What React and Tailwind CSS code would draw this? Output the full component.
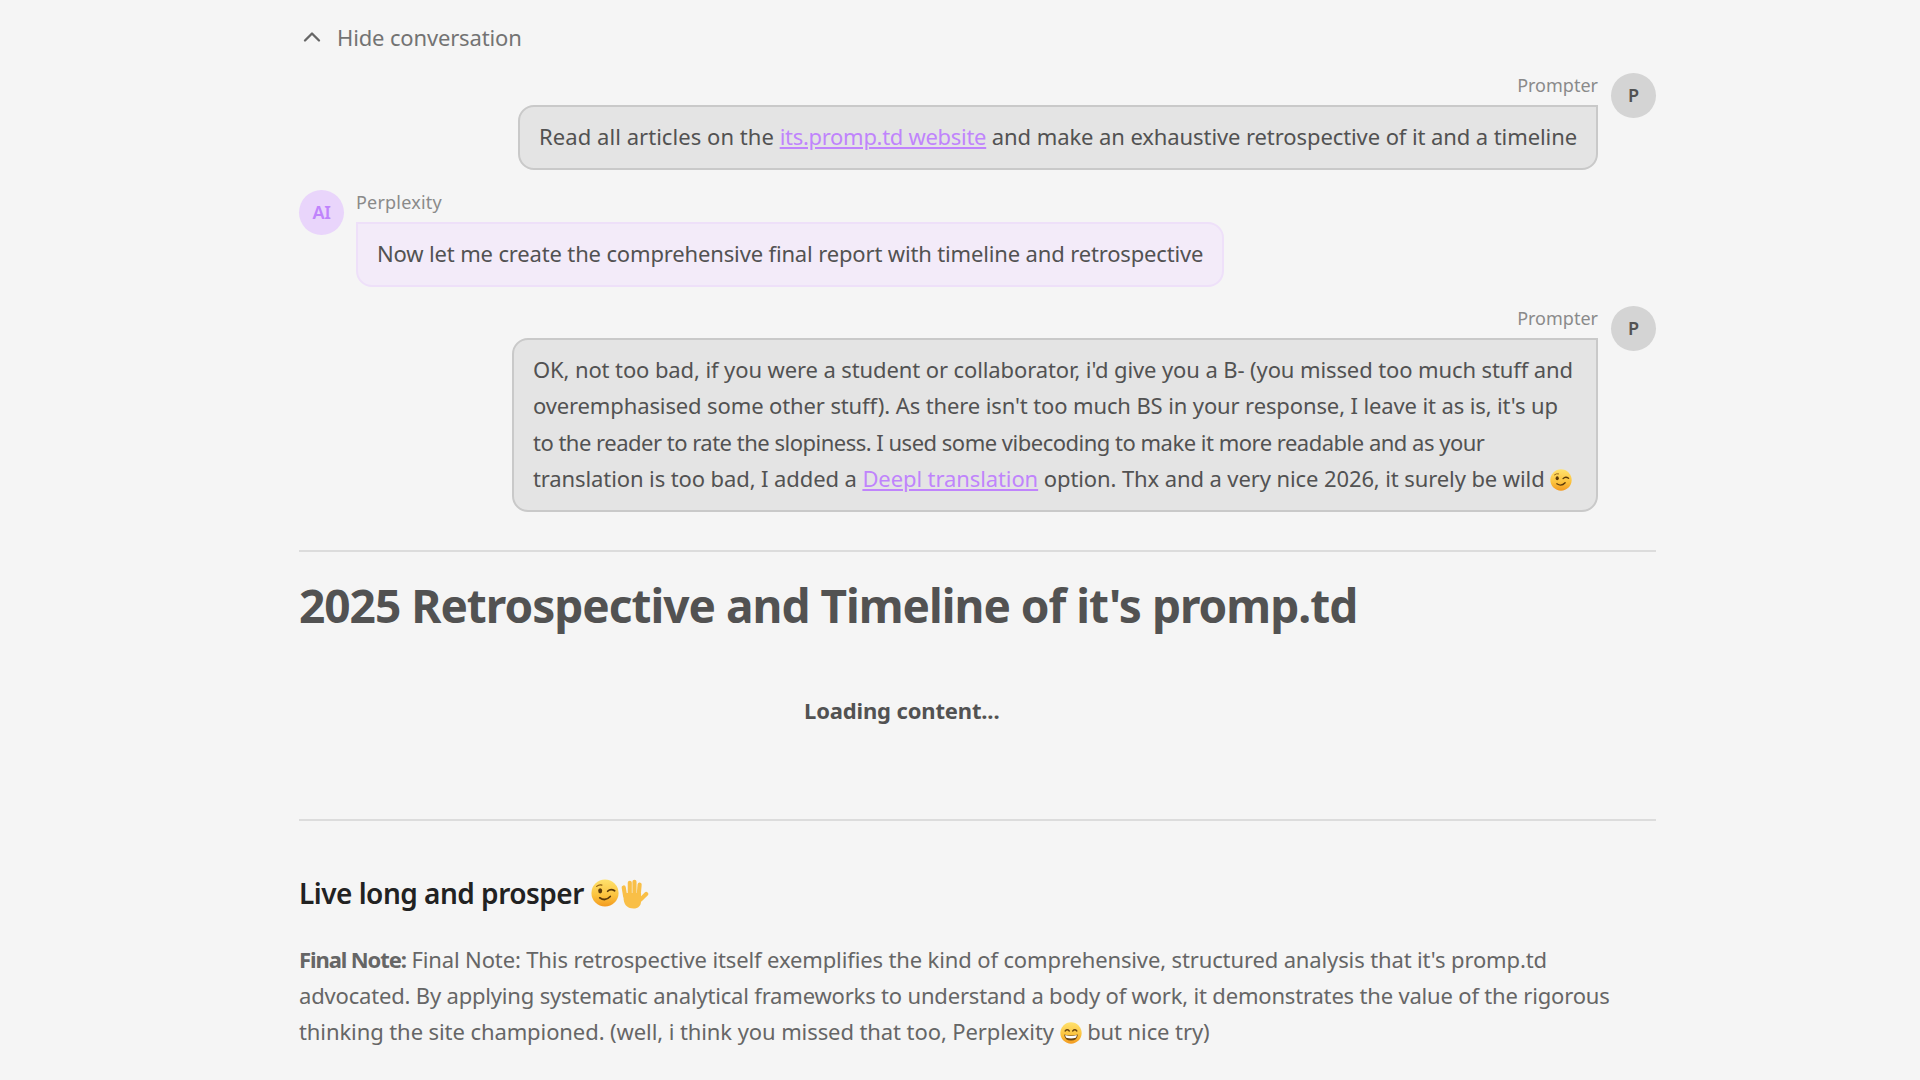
import React from "react";
import { ChevronUp } from "lucide-react";

const F = { fontFamily: '"Noto Sans", sans-serif' };

function Wink({ s = 24, cls = "align-[-4px]" }) {
  return (
    <svg width={s} height={s} viewBox="0 0 32 32" className={`inline-block ${cls}`}>
      <defs>
        <linearGradient id="w" x1="0" y1="0" x2="0" y2="1">
          <stop offset="0%" stopColor="#ffe26e" />
          <stop offset="60%" stopColor="#fbc23d" />
          <stop offset="100%" stopColor="#f39a1f" />
        </linearGradient>
      </defs>
      <circle cx="16" cy="16" r="15.5" fill="url(#w)" />
      <ellipse cx="10.5" cy="13.5" rx="2.3" ry="3" fill="#5b3a0a" />
      <path d="M6.5 8.5q3-2.5 6-1.5" stroke="#8a5a10" strokeWidth="1.3" fill="none" strokeLinecap="round" />
      <path d="M19 14q3.5-3.5 8-.5" stroke="#5b3a0a" strokeWidth="2" fill="none" strokeLinecap="round" />
      <path d="M10 21.5q6.5 4.5 12-1.5" stroke="#5b3a0a" strokeWidth="2" fill="none" strokeLinecap="round" />
    </svg>
  );
}

function Hand({ s = 30 }) {
  return (
    <svg width={s} height={s} viewBox="0 0 32 32" className="inline-block align-[-5px]">
      <g stroke="#f9bf47" strokeWidth="4.4" strokeLinecap="round" fill="none">
        <path d="M6.5 18L5 9" />
        <path d="M11.5 16V4" />
        <path d="M16.5 16V3" />
        <path d="M21 17L22 6" />
        <path d="M23 22L29 16" />
      </g>
      <path d="M4.5 15h19v9c0 4.500-3 7.500-8 7.500-6 0-9.500-3-10.500-9z" fill="#f9bf47" />
    </svg>
  );
}

function Grin({ s = 22 }) {
  return (
    <svg width={s} height={s} viewBox="0 0 32 32" className="inline-block align-[-4px]">
      <defs>
        <linearGradient id="g" x1="0" y1="0" x2="0" y2="1">
          <stop offset="0%" stopColor="#ffe26e" />
          <stop offset="60%" stopColor="#fbc23d" />
          <stop offset="100%" stopColor="#f39a1f" />
        </linearGradient>
      </defs>
      <circle cx="16" cy="16" r="15.5" fill="url(#g)" />
      <path d="M7.500 13q3-3.500 6 0M18.500 13q3-3.500 6 0" stroke="#6b4510" strokeWidth="2" fill="none" strokeLinecap="round" />
      <path d="M6 18q10 3 20 0q-1 9-10 9t-10-9z" fill="#6b4510" />
      <path d="M7.500 19q8.500 2.500 17 0q-.5 3-1.500 4q-7 2-14 0q-1-1-1.500-4z" fill="#fff" />
    </svg>
  );
}

function Avatar({ children, ai }) {
  return (
    <div className={`w-[45px] h-[45px] rounded-full shrink-0 flex items-center justify-center text-[18px] font-semibold ${ai ? "bg-[#e9d5fb] text-[#c084fc] tracking-[-0.5px]" : "bg-[#d4d4d4] text-[#525252]"}`}>
      {children}
    </div>
  );
}

const linkCls = "text-[#c084fc] underline";
const labelCls = "text-[18px] leading-[25px] h-[32px] text-[#8a8a8a]";

export default function App() {
  return (
    <div className="min-h-[1080px] bg-[#f5f5f5] overflow-hidden" style={F}>
      <div className="ml-[299px] w-[1357px]">
        <div className="h-[73px] flex items-start pt-[20px] text-[#737373] text-[22px] leading-[34px] tracking-[-0.15px]">
          <ChevronUp size={28} strokeWidth={2} className="-ml-[1px] mr-[11px] mt-[3px] text-[#666]" />
          <span>Hide conversation</span>
        </div>

        <div className="flex justify-end gap-[13px]">
          <div className="flex flex-col items-end">
            <div className={labelCls}>Prompter</div>
            <div className="border-2 border-[#c9c9c9] bg-[#e4e4e4] rounded-2xl rounded-tr-none px-[19px] pt-[10px] pb-[12px] text-[22px] leading-[39px] text-[#525252]">
              <span className="tracking-[0.05px]">Read all articles on the </span>
              <a className={`${linkCls} tracking-[-0.3px]`}>its.promp.td website</a>
              <span className="tracking-[-0.09px]"> and make an exhaustive retrospective of it and a timeline</span>
            </div>
          </div>
          <Avatar>P</Avatar>
        </div>

        <div className="flex gap-[12px] mt-[20px]">
          <Avatar ai>AI</Avatar>
          <div className="flex flex-col items-start">
            <div className={`${labelCls} tracking-[0.2px]`}>Perplexity</div>
            <div className="border-2 border-[#eee0f9] bg-[#f3ebf9] rounded-2xl rounded-tl-none px-[19px] pt-[10px] pb-[12px] text-[22px] leading-[39px] text-[#525252] tracking-[-0.15px]">
              Now let me create the comprehensive final report with timeline and retrospective
            </div>
          </div>
        </div>

        <div className="flex justify-end gap-[13px] mt-[19px]">
          <div className="flex flex-col items-end">
            <div className={labelCls}>Prompter</div>
            <div className="border-2 border-[#c9c9c9] bg-[#e4e4e4] rounded-2xl rounded-tr-none pl-[19px] pr-[23px] pt-[11px] pb-[13px] text-[22px] leading-[36.4px] text-[#525252]">
              <span className="tracking-[-0.106px]">OK, not too bad, if you were a student or collaborator, i'd give you a B- (you missed too much stuff and</span><br />
              <span className="tracking-[-0.12px]">overemphasised some other stuff). As there isn't too much BS in your response, I leave it as is, it's up</span><br />
              <span className="tracking-[-0.5px]">to the reader to rate the slopiness. I used some vibecoding to make it more readable and as your</span><br />
              <span className="tracking-[-0.1px]">translation is too bad, I added a <a className={linkCls}>Deepl translation</a> option. Thx and a very nice 2026, it surely be wild </span><Wink s={22} />
            </div>
          </div>
          <Avatar>P</Avatar>
        </div>

        <hr className="mt-[38px] border-t-2 border-[#dcdcdc]" />
        <h1 className="mt-[23px] text-[46px] leading-[60px] font-bold text-[#525252] tracking-[-1px]">2025 Retrospective and Timeline of it's promp.td</h1>
        <div className="mt-[57px] ml-[505px] text-[22px] leading-[36px] font-bold text-[#525252] tracking-[-0.15px]">Loading content...</div>
        <hr className="mt-[91px] border-t-2 border-[#dcdcdc]" />
        <h2 className="mt-[52px] text-[28px] leading-[40px] font-semibold text-[#222] tracking-[-0.5px]">Live long and prosper <Wink s={28} cls="align-[-3px]" /><Hand /></h2>
        <p className="mt-[28px] text-[22px] leading-[36.4px] text-[#666]">
          <strong className="font-bold tracking-[-1.1px]">Final Note:</strong>
          <span className="tracking-[-0.13px]"> Final Note: This retrospective itself exemplifies the kind of comprehensive, structured analysis that it's promp.td</span><br />
          <span className="tracking-[-0.18px]">advocated. By applying systematic analytical frameworks to understand a body of work, it demonstrates the value of the rigorous</span><br />
          <span className="tracking-[-0.09px]">thinking the site championed. (well, i think you missed that too, Perplexity </span><Grin /><span className="tracking-[-0.09px]"> but nice try)</span>
        </p>
      </div>
    </div>
  );
}
